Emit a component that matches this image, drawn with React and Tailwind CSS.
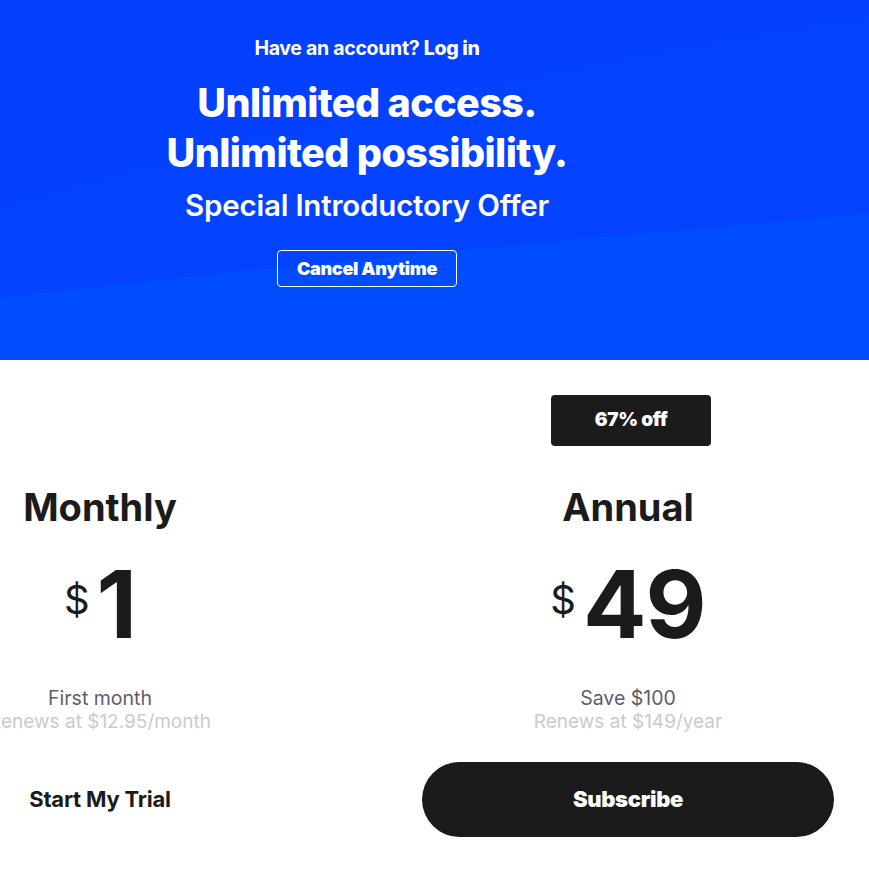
import React from "react";

export default function App() {
  return (
    <div className="w-[869px] min-h-[884px] bg-white overflow-hidden font-['Inter',sans-serif] text-[#1b1b1b]">
      <section className="relative h-[360px] bg-[#004cff] overflow-hidden">
        <svg className="absolute inset-0 h-full w-full" viewBox="0 0 869 360" preserveAspectRatio="none" aria-hidden="true">
          <path d="M0 0 H869 V213 C600 238 300 262 0 298 Z" fill="#0343ff" />
          <path d="M0 0 H869 V20 C600 60 300 120 0 210 Z" fill="#0440ff" opacity="0.5" />
        </svg>
        <div className="relative w-[734px] flex flex-col items-center pt-[35px] text-white">
          <p className="text-[19.5px] font-bold tracking-[-0.3px] leading-[26px]">
            Have an account? <a className="font-extrabold">Log in</a>
          </p>
          <h1 className="mt-[17px] text-[39.5px] font-extrabold leading-[50px] tracking-[-0.6px] text-center">
            Unlimited access.
            <br />
            Unlimited possibility.
          </h1>
          <p className="mt-[9px] text-[29.5px] font-semibold leading-[36px] tracking-[-0.2px]">
            Special Introductory Offer
          </p>
          <button className="mt-[27px] w-[180px] h-[37px] rounded-[4px] border border-white text-[18px] font-black tracking-[-0.3px] text-white">
            Cancel Anytime
          </button>
        </div>
      </section>

      <section className="grid grid-cols-[200px_412px] gap-x-[222px] pt-[35px]">
        <div className="flex flex-col items-center">
          <div className="h-[51px]" />
          <h2 className="mt-[39px] text-[38px] font-bold leading-[44px] tracking-[0px]">Monthly</h2>
          <div className="mt-[28px] flex items-start h-[95px]">
            <span className="mt-[19px] mr-[7px] text-[40px] font-normal leading-[48px]">$</span>
            <span className="text-[94px] font-bold leading-[95px] tracking-[-1px]">1</span>
          </div>
          <p className="mt-[34px] text-[19.5px] leading-[24px] text-[#5e5c6b] whitespace-nowrap">First month</p>
          <p className="text-[19px] leading-[24px] text-[#cbcad0] whitespace-nowrap">Renews at $12.95/month</p>
          <button className="mt-[28px] h-[75px] text-[22px] font-bold tracking-[-0.2px] text-[#1b1b1b] whitespace-nowrap">
            Start My Trial
          </button>
        </div>
        <div className="flex flex-col items-center">
          <div className="ml-[6px] w-[160px] h-[51px] rounded-[4px] bg-[#1b1b1b] flex items-center justify-center text-white text-[19px] font-black tracking-[-0.3px]">
            67% off
          </div>
          <h2 className="mt-[39px] text-[38px] font-bold leading-[44px] tracking-[0px]">Annual</h2>
          <div className="mt-[28px] flex items-start h-[95px]">
            <span className="mt-[19px] mr-[7px] text-[40px] font-normal leading-[48px]">$</span>
            <span className="text-[94px] font-bold leading-[95px] tracking-[-1px]">49</span>
          </div>
          <p className="mt-[34px] text-[19.5px] leading-[24px] text-[#5e5c6b] whitespace-nowrap">Save $100</p>
          <p className="text-[19px] leading-[24px] text-[#cbcad0] whitespace-nowrap">Renews at $149/year</p>
          <button className="mt-[28px] w-[412px] h-[75px] rounded-full bg-[#1b1b1b] text-white text-[22px] font-black tracking-[-0.3px]">
            Subscribe
          </button>
        </div>
      </section>
    </div>
  );
}
